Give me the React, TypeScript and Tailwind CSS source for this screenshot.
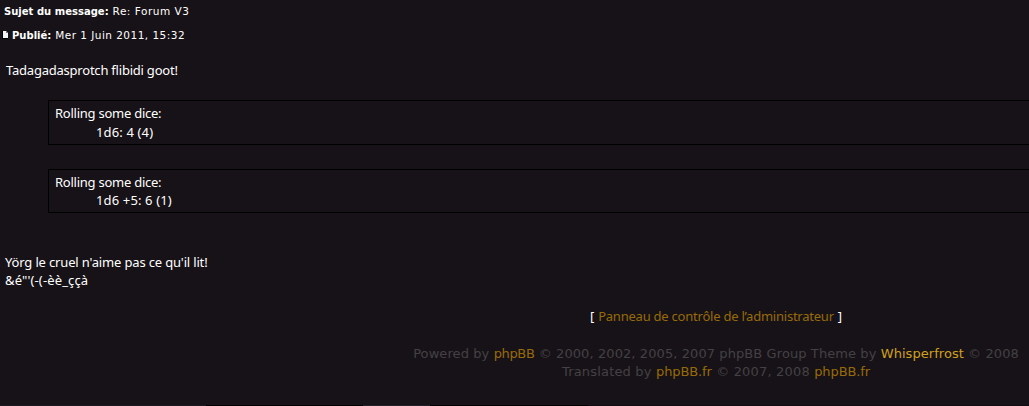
import React from "react";

interface DiceRollProps {
  result: string;
  className: string;
  resultClassName: string;
}

const PageIcon: React.FC = () => (
  <svg width="6" height="8" viewBox="0 0 6 8" className="mt-[5px] ml-[2px] mr-1 shrink-0">
    <path d="M1 0H4L6 2V7H1Z" fill="#f4f4f4" />
    <path d="M4 0V2H6" fill="#777" />
    <path d="M0 0H1V7H6V8H0Z" fill="#000" />
  </svg>
);

const DiceRoll: React.FC<DiceRollProps> = ({ result, className, resultClassName }) => (
  <div className={`ml-12 border border-r-0 border-black pl-1.5 pt-[3px] ${className}`}>
    <div className="h-[18px] leading-[18px] tracking-[-0.25px]">Rolling some dice:</div>
    <div className={`pl-[41px] h-[18px] leading-[18px] tracking-[0.14px] ${resultClassName}`}>{result}</div>
  </div>
);

const Link: React.FC<{ children: React.ReactNode }> = ({ children }) => (
  <a href="#" className="text-[#976b08]">
    {children}
  </a>
);

const App: React.FC = () => {
  return (
    <div className="flex flex-col w-[1029px] h-[406px] overflow-hidden bg-[#171217] text-white whitespace-nowrap font-['Noto_Sans',sans-serif] text-[13px]">
      <div className="h-6 pl-1 pt-[2px] shrink-0 font-['DejaVu_Sans',sans-serif] text-[10.5px] tracking-[0.52px] leading-[18px]">
        <b className="text-[10px] tracking-[0.02px]">Sujet du message:</b> Re: Forum V3
      </div>
      <div className="flex h-[37px] pt-[2px] shrink-0 font-['DejaVu_Sans',sans-serif] text-[10.5px] tracking-[0.47px] leading-[18px]">
        <PageIcon />
        <div>
          <b className="text-[10px] tracking-[0.02px]">Publié:</b> Mer 1 Juin 2011, 15:32
        </div>
      </div>

      <div className="h-[39px] pl-1.5 shrink-0 leading-[19px] tracking-[-0.22px]">Tadagadasprotch flibidi goot!</div>
      <DiceRoll result="1d6: 4 (4)" className="h-[45px] shrink-0" resultClassName="mt-px" />
      <DiceRoll result="1d6 +5: 6 (1)" className="h-11 mt-6 shrink-0" resultClassName="" />

      <div className="mt-10 pl-[5px] h-[54px] shrink-0 leading-[18px]">
        <div className="tracking-[-0.16px]">Yörg le cruel n'aime pas ce qu'il lit!</div>
        <div className="tracking-[0.14px]">&amp;é"'(-(-èè_ççà</div>
      </div>

      <div className="w-[1432px] shrink-0 text-center">
        <div className="flex justify-center gap-1 h-[38px] leading-[18px]">
          <span>[</span>
          <span className="tracking-[-0.23px]">
            <Link>Panneau de contrôle de l’administrateur</Link>
          </span>
          <span>]</span>
        </div>
        <div className="h-[60px] font-['DejaVu_Sans',sans-serif] leading-[18px] text-[#434144]">
          <div className="tracking-[0.09px]">
            Powered by{" "}
            <span className="tracking-[-0.35px]">
              <Link>phpBB</Link>
            </span>{" "}
            © 2000, 2002, 2005, 2007 phpBB Group Theme by{" "}
            <a href="#" className="text-[#d0a01c] tracking-[0.05px]">Whisperfrost</a> © 2008
          </div>
          <div className="tracking-[0.18px]">
            Translated by{" "}
            <span className="tracking-[-0.1px]">
              <Link>phpBB.fr</Link>
            </span>{" "}
            © 2007, 2008{" "}
            <span className="tracking-[-0.1px]">
              <Link>phpBB.fr</Link>
            </span>
          </div>
        </div>
      </div>
      <div className="flex h-px mt-auto shrink-0 bg-[#100c12]">
        <div className="w-[206px] bg-[#1c1921]" />
        <div className="w-[157px] bg-black" />
        <div className="w-[67px] bg-[#25212b]" />
        <div className="w-[158px] bg-black" />
      </div>
    </div>
  );
};

export default App;
